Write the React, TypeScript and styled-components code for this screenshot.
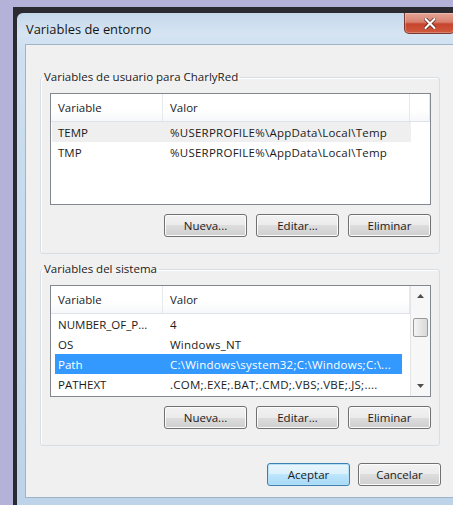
import styled, { createGlobalStyle } from "styled-components";

const GlobalStyle = createGlobalStyle`
  html, body {
    margin: 0;
    padding: 0;
  }
  body {
    background: #b5b2d9;
    font-family: "Open Sans", "Noto Sans", sans-serif;
    color: #1b1b1b;
  }
`;

const Desktop = styled.div`
  width: 453px;
  height: 505px;
  overflow: hidden;
  box-sizing: border-box;
  padding: 7px 0 0 13px;
  background: #b5b2d9;
`;

// dark outer edge of the aero window
const WindowEdge = styled.div`
  width: 450px;
  height: 510px;
  box-sizing: border-box;
  padding: 6px 0 0 4px;
  background: #2b2a31;
`;

const Frame = styled.div`
  height: 100%;
  box-sizing: border-box;
  padding: 0 8px;
  display: flex;
  flex-direction: column;
  border-top-left-radius: 6px;
  background: linear-gradient(180deg, #c4d7ea 0%, #d6e4f2 20px, #cddff0 40px, #bdd3e9 100%);
`;

const TitleBar = styled.div`
  height: 31px;
  display: flex;
  justify-content: space-between;
  align-items: flex-start;
`;

const Title = styled.span`
  padding: 8px 0 0 1px;
  font-size: 12.9px;
  line-height: 16px;
  color: #151515;
`;

const CloseButton = styled.div`
  width: 51px;
  height: 21px;
  box-sizing: border-box;
  display: flex;
  align-items: center;
  justify-content: center;
  border: 1px solid #7a3a32;
  border-top: none;
  border-radius: 0 0 5px 5px;
  background: linear-gradient(180deg, #e4a597 0%, #d8826f 45%, #c6442d 55%, #cf5a3e 100%);
  box-shadow: inset 0 0 0 1px rgba(255, 255, 255, 0.25);
`;

const Client = styled.div`
  height: 454px;
  box-sizing: border-box;
  border: 1px solid #9fb3c9;
  background: #f0f0f0;
  padding: 25px 14px 0 14px;
  display: flex;
  flex-direction: column;
`;

const Group = styled.fieldset<{ $spaced?: boolean }>`
  margin: ${(p) => (p.$spaced ? "8px 0 0" : "0")};
  padding: 0;
  min-width: 0;
  border: 1px solid #d5dfe5;
  border-radius: 3px;
  box-shadow: inset 1px 1px 0 #fff;
`;

const Legend = styled.legend`
  margin-left: 1px;
  padding: 0 2px;
  font-size: 11.5px;
  line-height: 14px;
  color: #1b1b1b;
`;

const GroupBody = styled.div`
  padding: 9px 8px 16px 9px;
  display: flex;
  flex-direction: column;
  gap: 9px;
`;

const ListBox = styled.div`
  height: 112px;
  box-sizing: border-box;
  border: 1px solid #828790;
  background: #fff;
  display: flex;
  overflow: hidden;
`;

const ListBody = styled.div`
  flex: 1;
  min-width: 0;
  display: flex;
  flex-direction: column;
`;

const Columns = styled.div`
  display: grid;
  grid-template-columns: 112px 247px 1fr;
`;

const HeaderRow = styled(Columns)`
  height: 27px;
  border-bottom: 1px solid #dfe3e8;
  background: linear-gradient(180deg, #ffffff 0%, #ffffff 60%, #f6f7f9 100%);
`;

const HeaderCell = styled.div`
  display: flex;
  align-items: center;
  padding-left: 7px;
  font-size: 11.5px;
  border-right: 1px solid #e6e8eb;
  white-space: nowrap;
`;

const toneFill = {
  focus: "linear-gradient(#efefef, #efefef) 1px 0 / 359px 100% no-repeat",
  selected: "linear-gradient(#3399ff, #3399ff) 4px 0 / 347px 100% no-repeat",
};

const Row = styled(Columns)<{ $tone?: "focus" | "selected" }>`
  height: 20px;
  font-size: 11.5px;
  background: ${(p) => (p.$tone ? toneFill[p.$tone] : "transparent")};
  color: ${(p) => (p.$tone === "selected" ? "#ffffff" : "#1b1b1b")};
`;

const Cell = styled.div`
  display: flex;
  align-items: center;
  padding-left: 7px;
  white-space: nowrap;
  overflow: hidden;
`;

const ValueCell = styled(Cell)`
  letter-spacing: 0.25px;
`;

const ScrollBar = styled.div`
  width: 19px;
  display: flex;
  flex-direction: column;
  align-items: center;
  border-left: 1px solid #e4e4e4;
  background: #f7f7f7;
`;

const ScrollArrow = styled.div`
  height: 20px;
  width: 100%;
  display: flex;
  align-items: center;
  justify-content: center;
`;

const ScrollTrack = styled.div`
  flex: 1;
  width: 100%;
  display: flex;
  flex-direction: column;
  align-items: center;
  padding-top: 12px;
`;

const Thumb = styled.div`
  width: 15px;
  height: 19px;
  box-sizing: border-box;
  border: 1px solid #9a9a9a;
  border-radius: 2px;
  background: linear-gradient(90deg, #f4f4f4 0%, #e6e6e6 50%, #d9d9d9 100%);
`;

const ButtonRow = styled.div<{ $gap: number }>`
  display: flex;
  justify-content: flex-end;
  gap: ${(p) => p.$gap}px;
`;

const Button = styled.div<{ $default?: boolean }>`
  width: 83px;
  height: 23px;
  box-sizing: border-box;
  display: flex;
  align-items: center;
  justify-content: center;
  font-size: 11.5px;
  color: #1b1b1b;
  border: 1px solid ${(p) => (p.$default ? "#3c7fb1" : "#707070")};
  border-radius: 3px;
  background: ${(p) =>
    p.$default
      ? "linear-gradient(180deg, #eaf6fd 0%, #d9f0fc 50%, #bee6fd 50%, #a7d9f5 100%)"
      : "linear-gradient(180deg, #f2f2f2 0%, #ebebeb 50%, #dddddd 50%, #cfcfcf 100%)"};
  box-shadow: inset 0 0 0 1px ${(p) => (p.$default ? "#b6e0f8" : "#fcfcfc")};
`;

const Footer = styled(ButtonRow)`
  margin: 17px -1px 0 0;
`;

type Variable = { name: string; value: string; tone?: "focus" | "selected" };

const userVars: Variable[] = [
  { name: "TEMP", value: "%USERPROFILE%\\AppData\\Local\\Temp", tone: "focus" },
  { name: "TMP", value: "%USERPROFILE%\\AppData\\Local\\Temp" },
];

const systemVars: Variable[] = [
  { name: "NUMBER_OF_P...", value: "4" },
  { name: "OS", value: "Windows_NT" },
  { name: "Path", value: "C:\\Windows\\system32;C:\\Windows;C:\\...", tone: "selected" },
  { name: "PATHEXT", value: ".COM;.EXE;.BAT;.CMD;.VBS;.VBE;.JS;...." },
];

const Arrow = ({ up }: { up?: boolean }) => (
  <svg width="7" height="4" viewBox="0 0 7 4">
    <path d={up ? "M0 4 L3.5 0 L7 4 Z" : "M0 0 L3.5 4 L7 0 Z"} fill="#4d4d4d" />
  </svg>
);

const VariableList = ({ rows, scroll }: { rows: Variable[]; scroll?: boolean }) => (
  <ListBox>
    <ListBody>
      <HeaderRow>
        <HeaderCell>Variable</HeaderCell>
        <HeaderCell>Valor</HeaderCell>
        <HeaderCell />
      </HeaderRow>
      {rows.map((r) => (
        <Row key={r.name} $tone={r.tone}>
          <Cell>{r.name}</Cell>
          <ValueCell>{r.value}</ValueCell>
        </Row>
      ))}
    </ListBody>
    {scroll && (
      <ScrollBar>
        <ScrollArrow>
          <Arrow up />
        </ScrollArrow>
        <ScrollTrack>
          <Thumb />
        </ScrollTrack>
        <ScrollArrow>
          <Arrow />
        </ScrollArrow>
      </ScrollBar>
    )}
  </ListBox>
);

const Actions = () => (
  <ButtonRow $gap={9}>
    <Button>Nueva...</Button>
    <Button>Editar...</Button>
    <Button>Eliminar</Button>
  </ButtonRow>
);

export default function App() {
  return (
    <>
      <GlobalStyle />
      <Desktop>
        <WindowEdge>
          <Frame>
            <TitleBar>
              <Title>Variables de entorno</Title>
              <CloseButton>
                <svg width="12" height="11" viewBox="0 0 12 11">
                  <path
                    d="M1.5 1 L10.5 10 M10.5 1 L1.5 10"
                    stroke="#5a1d14"
                    strokeWidth="3.6"
                    strokeLinecap="round"
                  />
                  <path
                    d="M1.5 1 L10.5 10 M10.5 1 L1.5 10"
                    stroke="#ffffff"
                    strokeWidth="2.2"
                    strokeLinecap="round"
                  />
                </svg>
              </CloseButton>
            </TitleBar>
            <Client>
              <Group>
                <Legend>Variables de usuario para CharlyRed</Legend>
                <GroupBody>
                  <VariableList rows={userVars} />
                  <Actions />
                </GroupBody>
              </Group>
              <Group $spaced>
                <Legend>Variables del sistema</Legend>
                <GroupBody>
                  <VariableList rows={systemVars} scroll />
                  <Actions />
                </GroupBody>
              </Group>
              <Footer $gap={8}>
                <Button $default>Aceptar</Button>
                <Button>Cancelar</Button>
              </Footer>
            </Client>
          </Frame>
        </WindowEdge>
      </Desktop>
    </>
  );
}
